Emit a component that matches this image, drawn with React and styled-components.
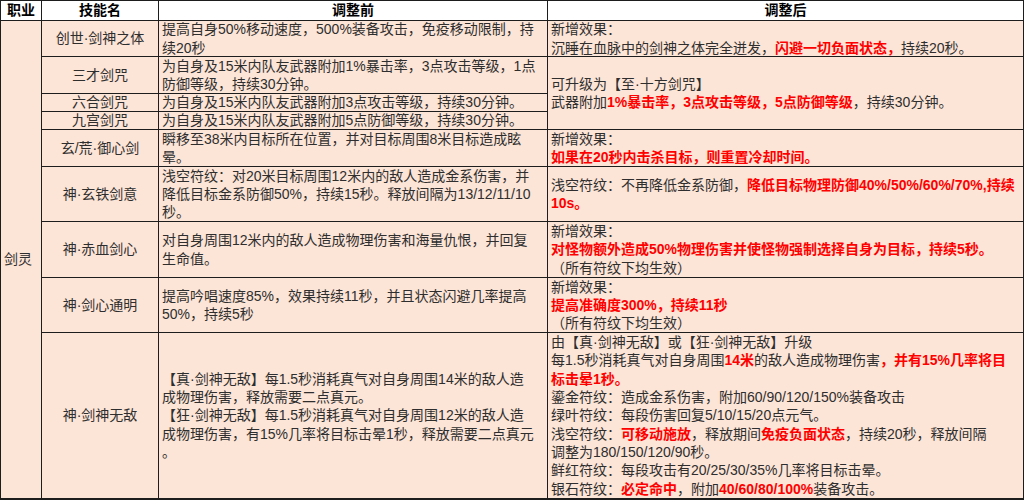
import React from 'react';
import styled, { createGlobalStyle } from 'styled-components';

const GlobalStyle = createGlobalStyle`
  html, body {
    margin: 0;
    padding: 0;
    background: #ffffff;
  }
  body {
    font-family: "Liberation Sans", "Noto Sans CJK SC", sans-serif;
  }
`;

const Sheet = styled.div`
  display: grid;
  grid-template-columns: 40px 116px 388px 475px;
  grid-template-rows: 19px 35px 36px 17px 17px 36px 54px 55px 54px 165px;
  gap: 1px;
  padding: 1px 1px 2px 1px;
  width: 1024px;
  box-sizing: border-box;
  background: #1d1d1d;
  font-size: 14px;
  color: #2e2e2e;
`;

const Cell = styled.div`
  background: #fce4d6;
  display: flex;
  flex-direction: column;
  justify-content: center;
  align-items: ${(p) => (p.$center ? 'center' : 'flex-start')};
  padding: 0 3px;
  line-height: ${(p) => (p.$tight ? '17px' : '18.3px')};
  grid-row: ${(p) => (p.$rows ? `span ${p.$rows}` : 'auto')};
  white-space: nowrap;
  overflow: visible;
`;

const HeadCell = styled(Cell)`
  background: #ffffff;
  align-items: center;
  color: #000000;
  font-weight: 700;
  font-size: 14px;
  line-height: 19px;
`;

const Line = styled.span`
  display: block;
`;

const R = styled.span`
  color: #ff0000;
  font-weight: 700;
`;

const rows = [
  {
    name: '创世·剑神之体',
    before: ['提高自身50%移动速度，500%装备攻击，免疫移动限制，持', '续20秒'],
    after: [
      '新增效果：',
      <>沉睡在血脉中的剑神之体完全迸发，<R>闪避一切负面状态，</R>持续20秒。</>,
    ],
  },
  {
    name: '三才剑咒',
    before: ['为自身及15米内队友武器附加1%暴击率，3点攻击等级，1点', '防御等级，持续30分钟。'],
    afterRows: 3,
    after: [
      '可升级为【至·十方剑咒】',
      <>武器附加<R>1%暴击率，3点攻击等级，5点防御等级</R>，持续30分钟。</>,
    ],
  },
  {
    name: '六合剑咒',
    tight: true,
    before: ['为自身及15米内队友武器附加3点攻击等级，持续30分钟。'],
  },
  {
    name: '九宫剑咒',
    tight: true,
    before: ['为自身及15米内队友武器附加5点防御等级，持续30分钟。'],
  },
  {
    name: '玄/荒·御心剑',
    before: ['瞬移至38米内目标所在位置，并对目标周围8米目标造成眩', '晕。'],
    after: ['新增效果：', <R>如果在20秒内击杀目标，则重置冷却时间。</R>],
  },
  {
    name: '神·玄铁剑意',
    before: [
      '浅空符纹：对20米目标周围12米内的敌人造成金系伤害，并',
      '降低目标金系防御50%，持续15秒。释放间隔为13/12/11/10',
      '秒。',
    ],
    after: [
      <>浅空符纹：不再降低金系防御，<R>降低目标物理防御40%/50%/60%/70%,持续</R></>,
      <R>10s。</R>,
    ],
  },
  {
    name: '神·赤血剑心',
    before: ['对自身周围12米内的敌人造成物理伤害和海量仇恨，并回复', '生命值。'],
    after: [
      '新增效果：',
      <R>对怪物额外造成50%物理伤害并使怪物强制选择自身为目标，持续5秒。</R>,
      '（所有符纹下均生效）',
    ],
  },
  {
    name: '神·剑心通明',
    before: ['提高吟唱速度85%，效果持续11秒，并且状态闪避几率提高', '50%，持续5秒'],
    after: ['新增效果：', <R>提高准确度300%，持续11秒</R>, '（所有符纹下均生效）'],
  },
  {
    name: '神·剑神无敌',
    before: [
      '【真·剑神无敌】每1.5秒消耗真气对自身周围14米的敌人造',
      '成物理伤害，释放需要二点真元。',
      '【狂·剑神无敌】每1.5秒消耗真气对自身周围12米的敌人造',
      '成物理伤害，有15%几率将目标击晕1秒，释放需要二点真元',
      '。',
    ],
    after: [
      '由【真·剑神无敌】或【狂·剑神无敌】升级',
      <>每1.5秒消耗真气对自身周围<R>14米</R>的敌人造成物理伤害<R>，并有15%几率将目</R></>,
      <R>标击晕1秒。</R>,
      '鎏金符纹：造成金系伤害，附加60/90/120/150%装备攻击',
      '绿叶符纹：每段伤害回复5/10/15/20点元气。',
      <>浅空符纹：<R>可移动施放</R>，释放期间<R>免疫负面状态</R>，持续20秒，释放间隔</>,
      '调整为180/150/120/90秒。',
      '鲜红符纹：每段攻击有20/25/30/35%几率将目标击晕。',
      <>银石符纹：<R>必定命中</R>，附加<R>40/60/80/100%</R>装备攻击。</>,
    ],
  },
];

const Lines = ({ items }) => items.map((t, i) => <Line key={i}>{t}</Line>);

export default function App() {
  return (
    <>
      <GlobalStyle />
      <Sheet>
        <HeadCell>职业</HeadCell>
        <HeadCell>技能名</HeadCell>
        <HeadCell>调整前</HeadCell>
        <HeadCell>调整后</HeadCell>
        {rows.map((row, i) => (
          <React.Fragment key={row.name}>
            {i === 0 && <Cell $rows={rows.length}>剑灵</Cell>}
            <Cell $center $tight={row.tight}>{row.name}</Cell>
            <Cell $tight={row.tight}>
              <Lines items={row.before} />
            </Cell>
            {row.after && (
              <Cell $rows={row.afterRows}>
                <Lines items={row.after} />
              </Cell>
            )}
          </React.Fragment>
        ))}
      </Sheet>
    </>
  );
}
